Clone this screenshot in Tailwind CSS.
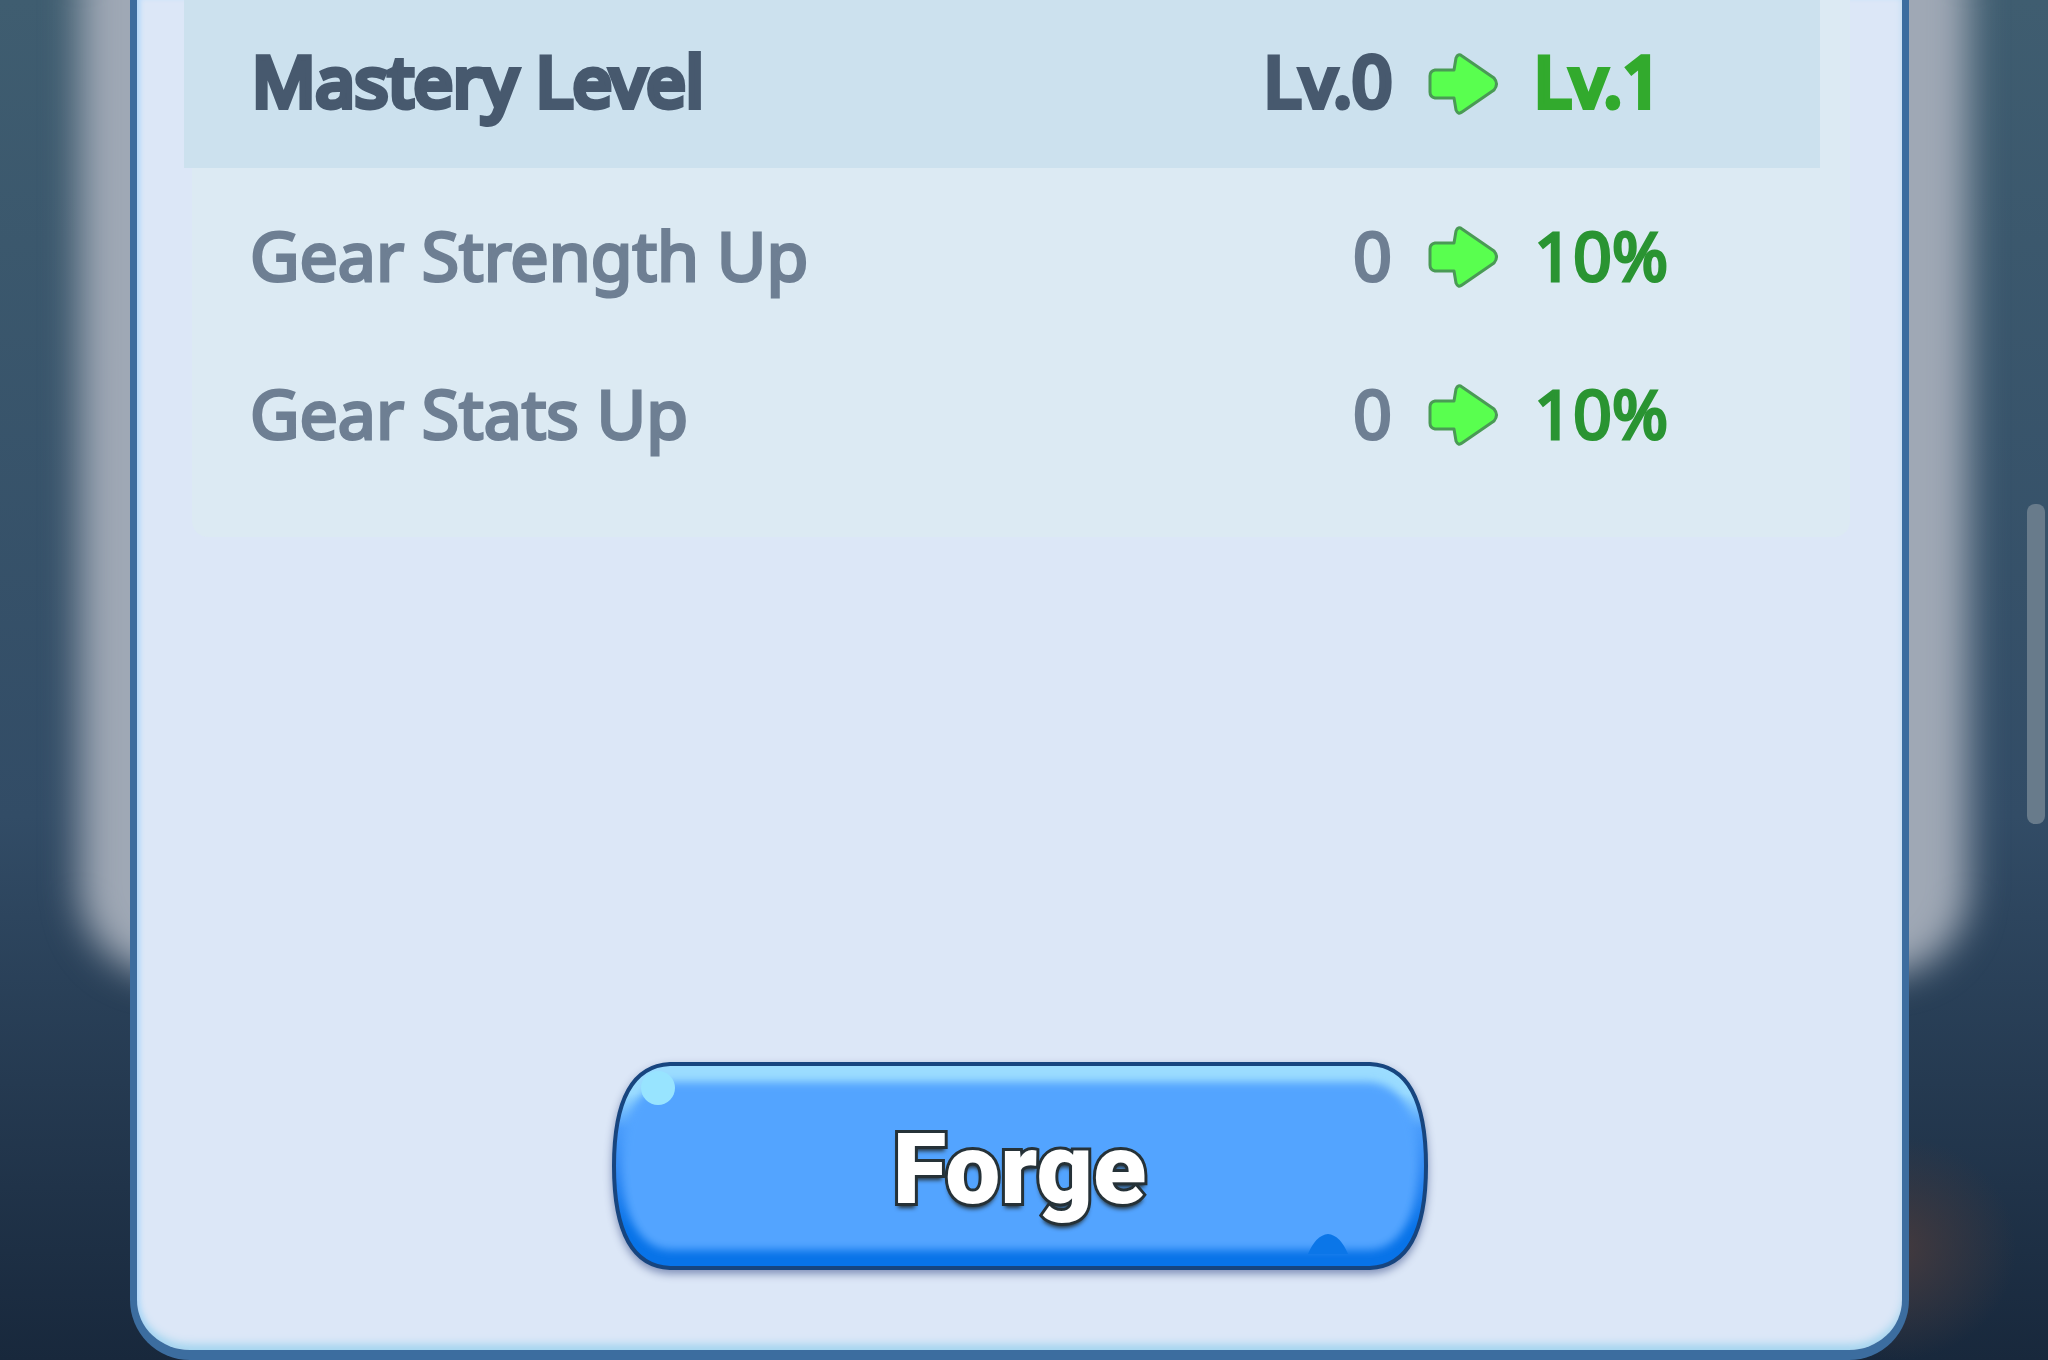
<!DOCTYPE html>
<html lang="en">
<head>
  <meta charset="UTF-8" />
  <meta name="viewport" content="width=device-width, initial-scale=1.0" />
  <title>Forge</title>
  <script src="https://cdn.jsdelivr.net/npm/@tailwindcss/browser@4"></script>
</head>
<body class="relative min-h-screen overflow-hidden bg-linear-to-b from-[#3f5d70] via-[#324c66] via-60% to-[#18283c] font-['Noto_Sans','Liberation_Sans',sans-serif]">

  <!-- glow behind the dialog -->
  <div class="absolute left-[80px] right-[80px] -top-24 h-[1072px] rounded-[88px] bg-[#9fa8b5] blur-[18px]"></div>
  <div class="absolute right-8 bottom-0 w-[240px] h-[320px] bg-radial-[closest-side_at_50%_65%] from-[#443a3e] to-transparent"></div>

  <main class="relative min-h-screen ml-[130px] mr-[139px] flex flex-col rounded-b-[60px] border-x-[7px] border-b-[10px] border-[#3c6d9f] bg-[#dce7f7] shadow-[inset_0_-8px_8px_-2px_#a5d5ef,inset_5px_0_5px_-2px_#b9dcff]">

    <section class="ml-[55px] mr-[52px] pb-[53px] rounded-b-2xl bg-[#dceaf3]">
      <div class="-ml-[8px] mr-[30px]">
        <table class="w-full text-[68px] leading-none text-[#6e7f93] [-webkit-text-stroke:3px_currentColor]">
          <tbody>
            <tr class="h-[168px] bg-[#cce1ee] text-[70px] text-[#47596e] [-webkit-text-stroke:6px_currentColor]">
              <th scope="row" class="pl-[68px] pb-2 text-left font-normal">Mastery Level</th>
              <td class="pb-2 text-right">Lv.0</td>
              <td class="w-[142px]">
                <svg class="mx-auto w-[72px] h-[64px]" viewBox="0 0 72 64" fill="#59ff4f" stroke="#4a9a55" stroke-width="3" stroke-linejoin="round">
                  <path d="M8 18Q3 19 3 24V40Q3 45 8 46L27 46L29 58Q31 63 35 60L67 38Q72 32 67 26L35 4Q31 1 29 6L27 18Z" />
                </svg>
              </td>
              <td class="w-[286px] pb-2 text-[#32aa2d]">Lv.1</td>
            </tr>
            <tr class="h-[178px]">
              <th scope="row" class="pl-[66px] pb-1 text-left font-normal">Gear Strength Up</th>
              <td class="pb-1 text-right">0</td>
              <td>
                <svg class="mx-auto w-[72px] h-[64px]" viewBox="0 0 72 64" fill="#59ff4f" stroke="#4a9a55" stroke-width="3" stroke-linejoin="round">
                  <path d="M8 18Q3 19 3 24V40Q3 45 8 46L27 46L29 58Q31 63 35 60L67 38Q72 32 67 26L35 4Q31 1 29 6L27 18Z" />
                </svg>
              </td>
              <td class="pb-1 text-[#2a9432]">10%</td>
            </tr>
            <tr class="h-[138px]">
              <th scope="row" class="pl-[66px] pb-1 text-left font-normal">Gear Stats Up</th>
              <td class="pb-1 text-right">0</td>
              <td>
                <svg class="mx-auto w-[72px] h-[64px]" viewBox="0 0 72 64" fill="#59ff4f" stroke="#4a9a55" stroke-width="3" stroke-linejoin="round">
                  <path d="M8 18Q3 19 3 24V40Q3 45 8 46L27 46L29 58Q31 63 35 60L67 38Q72 32 67 26L35 4Q31 1 29 6L27 18Z" />
                </svg>
              </td>
              <td class="pb-1 text-[#2a9432]">10%</td>
            </tr>
          </tbody>
        </table>
      </div>
    </section>

    <button type="button" class="relative mt-auto mx-auto mb-[80px] pt-2 w-[816px] h-[208px] font-['Roboto','Liberation_Sans',sans-serif] text-[98px] leading-none font-black text-white">
      <svg class="absolute inset-0 w-full h-full overflow-visible drop-shadow-[0_4px_4px_#8090b8]" viewBox="0 0 816 208" aria-hidden="true">
        <defs>
          <clipPath id="shape"><path d="M58 2H758C802 4 814 50 814 104C814 158 802 204 758 206H58C14 204 2 158 2 104C2 50 14 4 58 2Z" /></clipPath>
          <filter id="soft" x="-5%" y="-10%" width="110%" height="120%"><feGaussianBlur stdDeviation="4" /></filter>
          <linearGradient id="rim" x1="0" y1="0" x2="0" y2="1">
            <stop offset=".15" stop-color="#9bdcff" />
            <stop offset=".32" stop-color="#4a9cfb" />
            <stop offset=".55" stop-color="#2c86f2" />
            <stop offset=".8" stop-color="#0873e8" />
          </linearGradient>
        </defs>
        <g clip-path="url(#shape)">
          <rect width="816" height="208" fill="url(#rim)" />
          <path d="M60 20H756C794 22 806 60 806 104C806 150 790 188 756 188H60C26 188 10 150 10 104C10 60 22 22 60 20Z" fill="#52a4ff" filter="url(#soft)" />
          <ellipse cx="46" cy="26" rx="17" ry="17" fill="#98e4ff" />
          <path d="M696 192Q704 173 716 172Q728 173 736 192Z" fill="#0b76e8" />
        </g>
        <path d="M58 2H758C802 4 814 50 814 104C814 158 802 204 758 206H58C14 204 2 158 2 104C2 50 14 4 58 2Z" fill="none" stroke="#17457f" stroke-width="4" />
      </svg>
      <span class="relative [-webkit-text-stroke:6px_#263238] [paint-order:stroke_fill] [text-shadow:0_5px_4px_#263238]">Forge</span>
    </button>
  </main>

  <!-- scroll thumb -->
  <div class="absolute right-[3px] top-[504px] w-[18px] h-[320px] rounded-lg bg-[#687b8b]"></div>
</body>
</html>
